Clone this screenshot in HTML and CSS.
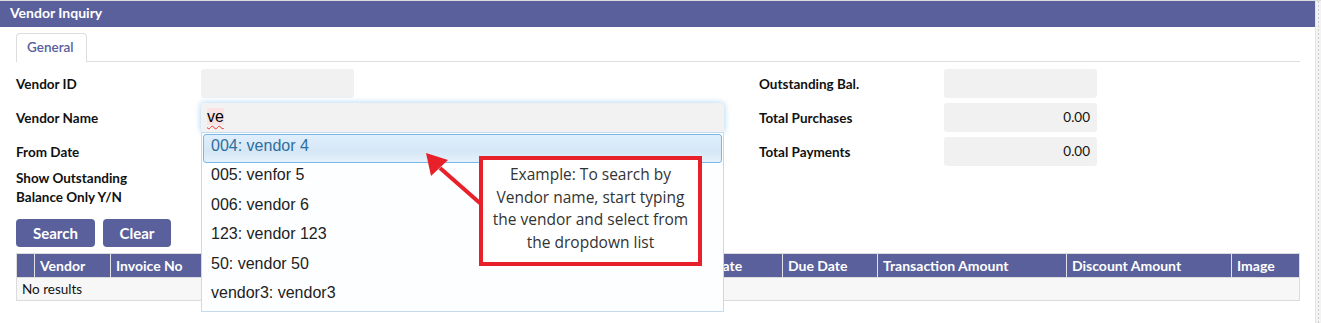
FILE: index.html
```html
<!DOCTYPE html>
<html>
    <head>
        <meta name="viewport" content="width=device-width, initial-scale=1" />
        <link rel="stylesheet" href="styles.css">
    </head>
    <body>
        <div class="page">
            <div class="main">
                <div class="titlebar">Vendor Inquiry</div>
                <div class="content">
                    <div class="tabs">
                        <div class="tab">General</div>
                    </div>

                    <div class="form">
                        <label class="lbl">Vendor ID</label>
                        <div class="field"><input class="inp short" type="text" /></div>
                        <span></span>
                        <label class="lbl">Outstanding Bal.</label>
                        <div class="field"><input class="inp short num" type="text" /></div>

                        <label class="lbl">Vendor Name</label>
                        <div class="field lookup">
                            <div class="inp wide focus"><span class="typed">ve</span></div>
                            <ul class="dropdown">
                                <li class="active">004: vendor 4</li>
                                <li>005: venfor 5</li>
                                <li>006: vendor 6</li>
                                <li>123: vendor 123</li>
                                <li>50: vendor 50</li>
                                <li>vendor3: vendor3</li>
                            </ul>
                        </div>
                        <span></span>
                        <label class="lbl">Total Purchases</label>
                        <div class="field"><div class="inp short num">0.00</div></div>

                        <label class="lbl">From Date</label>
                        <div class="field"></div>
                        <span></span>
                        <label class="lbl">Total Payments</label>
                        <div class="field"><div class="inp short num">0.00</div></div>

                        <label class="lbl two-line">Show Outstanding<br>Balance Only Y/N</label>
                        <div class="field"></div>
                    </div>

                    <div class="actions">
                        <button class="btn">Search</button>
                        <button class="btn">Clear</button>
                    </div>

                    <div class="results">
                        <div class="thead">
                            <div class="th"></div>
                            <div class="th">Vendor</div>
                            <div class="th">Invoice No</div>
                            <div class="th">Reference</div>
                            <div class="th">Description</div>
                            <div class="th">Invoice Date</div>
                            <div class="th">Due Date</div>
                            <div class="th">Transaction Amount</div>
                            <div class="th">Discount Amount</div>
                            <div class="th">Image</div>
                        </div>
                        <div class="empty">No results</div>
                    </div>
                </div>
            </div>
            <div class="strip"></div>

            <!-- annotation -->
            <svg class="arrow" width="70" height="70" viewBox="0 0 70 70">
                <line x1="20" y1="23" x2="61" y2="59" stroke="#e8202a" stroke-width="4" />
                <polygon points="6,8 11,31 28,15" fill="#e8202a" />
            </svg>
            <div class="callout">Example: To search by<br>Vendor name, start typing<br>the vendor and select from<br>the dropdown list</div>
        </div>
    </body>
</html>
```

FILE: styles.css
```css
body {
    margin: 0;
    background-color: #fff;
    font-family: Lato, "Liberation Sans", sans-serif;
    color: #111;
}

.page {
    position: relative;
    display: flex;
    height: 323px;
    border-top: 1px solid #ddd;
    box-sizing: border-box;
}
.main {
    width: 1315px;
}
.strip {
    width: 6px;
    background-color: #f3f3f3;
    border-left: 1px solid #e4e4e4;
    background-image: linear-gradient(#ccc 50%, transparent 50%);
    background-size: 1px 4px;
    background-repeat: repeat-y;
    background-position: 2px 0;
}

.titlebar {
    background-color: #59609c;
    color: #fff;
    font-weight: 700;
    font-size: 14px;
    height: 26px;
    line-height: 24px;
    padding-left: 10px;
}

.content {
    padding: 0 15px 0 16px;
}

/* Tabs */
.tabs {
    margin-top: 6px;
    border-bottom: 1px solid #ddd;
    display: flex;
}
.tab {
    border: 1px solid #ddd;
    border-bottom: none;
    border-radius: 4px 4px 0 0;
    color: #59609c;
    font-size: 13.5px;
    font-weight: 600;
    height: 28px;
    line-height: 27px;
    padding: 0 10px 0 10px;
    width: 49px;
    background: #fff;
    margin-bottom: -1px;
}

/* Form */
.form {
    display: grid;
    grid-template-columns: 185px 523px 35px 185px 153px;
    grid-auto-rows: 29px;
    row-gap: 5px;
    margin-top: 7px;
    align-items: center;
}
.lbl {
    font-size: 13.5px;
    font-weight: 700;
}
.two-line {
    line-height: 19px;
    align-self: start;
    margin-top: -2px;
}
.field {
    position: relative;
    height: 29px;
}
.inp {
    box-sizing: border-box;
    height: 29px;
    border: none;
    border-radius: 3px;
    background-color: #f1f1f1;
    font-family: "Liberation Sans", sans-serif;
    font-size: 13px;
    padding: 0 7px;
    line-height: 29px;
    display: block;
}
.short {
    width: 153px;
}
.wide {
    width: 523px;
}
.num {
    text-align: right;
    font-family: Lato, sans-serif;
    font-size: 13.5px;
}
.focus {
    background-color: #f2f2f2;
    box-shadow: 0 0 6px rgba(102, 175, 233, 0.6);
    padding-left: 6px;
    line-height: 27px;
}
.typed {
    font-size: 16px;
    color: #000;
    text-decoration: underline wavy #e33;
    text-decoration-thickness: 1px;
    text-underline-offset: 3px;
    background-color: #fbe3e3;
}

/* Autocomplete list */
.dropdown {
    position: absolute;
    left: 0;
    top: 29px;
    width: 523px;
    box-sizing: border-box;
    margin: 0;
    padding: 1px;
    list-style: none;
    background-color: #fdfeff;
    border: 1px solid #c5dbec;
    z-index: 5;
}
.dropdown li {
    height: 29.4px;
    line-height: 21px;
    box-sizing: border-box;
    padding-left: 7px;
    font-family: "Liberation Sans", sans-serif;
    font-size: 16px;
    color: #222;
    border: 1px solid transparent;
}
.dropdown li.active {
    background: linear-gradient(#dfeffc, #d5e7f6 60%, #e6f1fb);
    border: 1px solid #79b7e7;
    border-radius: 3px;
    color: #2e6e9e;
}

/* Buttons */
.actions {
    display: flex;
    gap: 8px;
    margin-top: 19px;
}
.btn {
    background-color: #59609c;
    color: #fff;
    border: none;
    border-radius: 4px;
    font-family: Lato, sans-serif;
    font-weight: 700;
    font-size: 15px;
    height: 28px;
    padding: 0 14px;
}
.btn:first-child {
    width: 79px;
}
.btn:last-child {
    width: 68px;
}

/* Results table */
.results {
    margin-top: 6px;
    width: 1284px;
}
.thead {
    display: grid;
    grid-template-columns: 17px 76px 151px 200px 197px 124px 95px 189px 165px 70px;
    background-color: #59609c;
    height: 24px;
    border: 1px solid #dcdcdc;
    border-bottom: none;
    box-sizing: border-box;
}
.th {
    color: #fff;
    font-weight: 700;
    font-size: 14px;
    line-height: 23px;
    padding-left: 5px;
    border-left: 1px solid #e2e2ea;
    white-space: nowrap;
    overflow: hidden;
}
.th:first-child {
    border-left: none;
}
.empty {
    background-color: #f7f7f7;
    border: 1px solid #dcdcdc;
    height: 24px;
    box-sizing: border-box;
    line-height: 22px;
    font-size: 13.5px;
    padding-left: 5px;
}

/* Annotation overlay */
.arrow {
    position: absolute;
    left: 420px;
    top: 144px;
    z-index: 6;
}
.callout {
    position: absolute;
    left: 479px;
    top: 155px;
    width: 223px;
    height: 110px;
    box-sizing: border-box;
    border: 4px solid #e8202a;
    background-color: #fff;
    color: #333;
    font-family: "Open Sans", sans-serif;
    font-size: 15.5px;
    line-height: 22.5px;
    text-align: center;
    padding-top: 3px;
    z-index: 6;
}
```
